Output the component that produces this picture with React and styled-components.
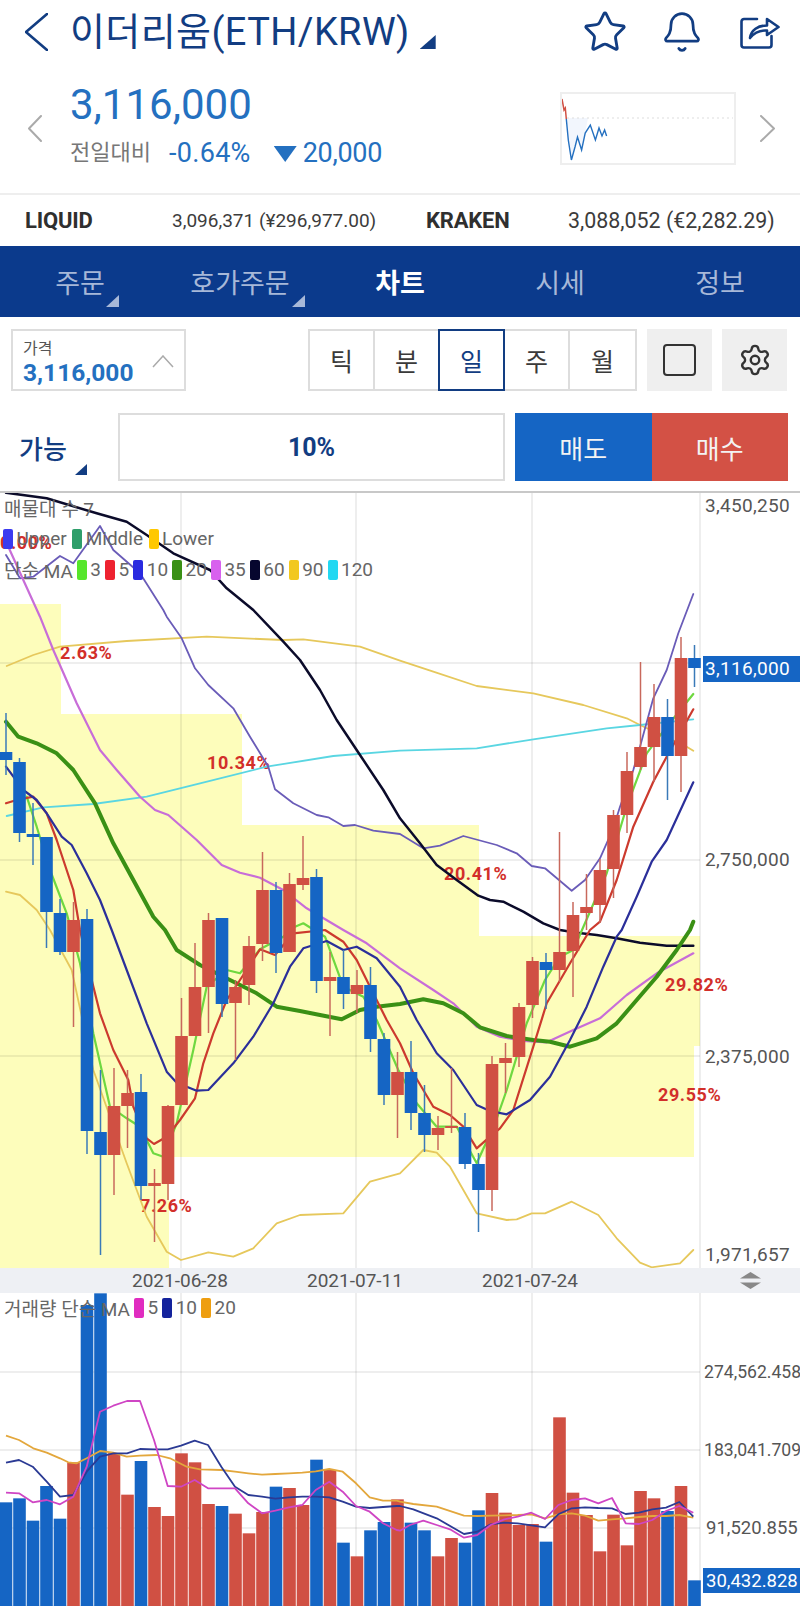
import React from 'react'
import styled, { createGlobalStyle } from 'styled-components'
import { Star, Bell, Settings } from 'lucide-react'

const BLUE = '#1565c4'
const RED = '#d05043'
const NAVY = '#123d82'

// zoom crops are 3x, so lines are noted in crop coords and scaled here
const seg = (ox, oy, pts) => pts.map(([x, y]) => [ox + x / 3, oy + y / 3])
const pts = (...segs) => segs.flat().map(([x, y]) => `${x.toFixed(1)},${y.toFixed(1)}`).join(' ')

const candleX = (i) => 6 + 13.5 * i

// color, wick high, body top, body bottom, wick low
const candles = [
  ['b', 713, 752, 760, 775], ['b', 758, 762, 833, 842], ['b', 803, 834, 837, 865], ['b', 837, 837, 912, 948],
  ['b', 899, 913, 952, 955], ['r', 902, 920, 952, 1027], ['b', 909, 919, 1131, 1154], ['b', 1070, 1132, 1155, 1255],
  ['r', 1068, 1106, 1155, 1195], ['r', 1070, 1093, 1106, 1148], ['b', 1074, 1092, 1186, 1200], ['r', 1169, 1183, 1186, 1242],
  ['r', 1105, 1106, 1184, 1200], ['r', 998, 1036, 1105, 1105], ['r', 943, 987, 1036, 1036], ['r', 913, 920, 987, 1033],
  ['b', 918, 918, 1004, 1017], ['r', 980, 987, 1003, 1060], ['r', 936, 946, 985, 1005], ['r', 852, 890, 944, 961],
  ['b', 882, 890, 953, 973], ['r', 873, 884, 952, 952], ['r', 836, 878, 885, 890], ['b', 869, 877, 981, 993],
  ['r', 952, 977, 981, 1036], ['b', 950, 977, 994, 1009], ['r', 970, 985, 994, 1013], ['b', 967, 985, 1039, 1052],
  ['b', 1033, 1039, 1095, 1105], ['r', 1052, 1072, 1095, 1138], ['b', 1041, 1072, 1113, 1130], ['b', 1085, 1113, 1135, 1152],
  ['r', 1116, 1128, 1135, 1150], ['r', 1068, 1126, 1128, 1133], ['b', 1113, 1127, 1164, 1169], ['b', 1153, 1164, 1190, 1232],
  ['r', 1056, 1064, 1190, 1211], ['r', 1043, 1058, 1063, 1093], ['r', 1003, 1007, 1057, 1067], ['r', 957, 961, 1005, 1018],
  ['b', 953, 962, 970, 1009], ['r', 832, 952, 970, 982], ['r', 902, 915, 951, 997], ['r', 874, 907, 913, 930],
  ['r', 859, 870, 905, 923], ['r', 810, 815, 869, 898], ['r', 752, 771, 815, 833], ['r', 662, 747, 767, 770],
  ['r', 684, 717, 747, 782], ['b', 699, 717, 756, 800], ['r', 637, 658, 756, 792], ['b', 645, 658, 668, 687],
]

const zones = [
  [61, 604, 714], [242, 714, 825], [479, 825, 936], [700, 936, 1046], [694, 1046, 1157], [169, 1157, 1268],
]

const percents = [
  ['0.00%', 0, 549], ['2.63%', 60, 659], ['10.34%', 207, 769], ['20.41%', 444, 880],
  ['29.82%', 665, 991], ['29.55%', 658, 1101], ['7.26%', 140, 1212],
]

const lines = [
  { c: '#e6c85c', w: 1.8, p: pts(seg(0, 580, [[20, 258], [100, 225], [180, 200], [380, 183], [620, 170], [850, 180], [910, 178], [1080, 200], [1200, 242]]), seg(400, 580, [[100, 275], [230, 318], [400, 340], [550, 375], [680, 415], [720, 435], [860, 500], [880, 512]])) },
  { c: '#e6c85c', w: 1.8, p: pts(seg(0, 580, [[18, 935], [60, 945], [110, 990], [150, 1050]]), seg(0, 930, [[215, 120], [280, 420], [380, 700], [440, 860], [500, 965], [543, 990], [625, 967], [700, 980], [760, 955], [830, 880], [900, 855], [1030, 850], [1110, 755], [1200, 730]]), seg(400, 930, [[70, 660], [110, 668], [150, 710], [230, 850], [320, 870], [350, 868], [395, 850], [435, 850], [515, 815], [595, 855], [650, 925], [720, 998], [755, 1012], [840, 1000], [880, 960]])) },
  { c: '#5ad6e2', w: 1.8, p: pts(seg(0, 580, [[20, 708], [130, 682], [280, 672], [440, 650], [600, 610], [800, 560], [1000, 528], [1200, 512]]), seg(400, 580, [[230, 505], [400, 478], [620, 445], [720, 435], [880, 418]])) },
  { c: '#6a5cb8', w: 1.8, p: pts(seg(0, 480, [[18, 225], [60, 295], [100, 290], [180, 228], [220, 250], [300, 138], [340, 210], [420, 280], [490, 390]]), seg(0, 580, [[500, 110], [545, 175], [585, 265], [625, 315], [700, 385], [750, 470], [805, 560], [825, 628], [880, 670], [950, 705], [985, 712], [1030, 738], [1065, 735], [1120, 752], [1200, 762]]), seg(400, 580, [[70, 805], [120, 797], [190, 768], [290, 795], [350, 820], [395, 858], [435, 865], [515, 932], [555, 900], [600, 835], [640, 745], [660, 680], [700, 570], [720, 500], [760, 355], [800, 270], [835, 160], [880, 42]])) },
  { c: '#c86dd8', w: 2.2, p: pts(seg(0, 480, [[25, 200]]), seg(0, 580, [[70, 0], [120, 110], [160, 210], [230, 370], [300, 510], [350, 570], [420, 650], [465, 690], [505, 705], [590, 780], [665, 855], [720, 878], [780, 893], [850, 930], [920, 985], [1030, 1050]]), seg(0, 930, [[1100, 40], [1200, 115]]), seg(400, 930, [[100, 180], [160, 220], [230, 290], [300, 320], [370, 333], [440, 337], [520, 300], [600, 265], [680, 195], [770, 130], [880, 70]])) },
  { c: '#0b0b2a', w: 2.5, p: pts(seg(0, 480, [[18, 38], [140, 55], [290, 100], [380, 125], [440, 165], [520, 220], [630, 270], [680, 325], [760, 390]]), seg(0, 580, [[850, 185], [900, 240], [960, 330], [1010, 420], [1080, 525], [1150, 630], [1200, 715]]), seg(400, 580, [[60, 790], [110, 855], [170, 900], [235, 947], [270, 960], [310, 965], [370, 995], [430, 1030], [480, 1050]]), seg(400, 930, [[530, 8], [590, 15], [650, 25], [720, 38], [800, 47], [880, 47]])) },
  { c: '#3a9015', w: 4, p: pts(seg(0, 580, [[18, 425], [55, 470], [110, 490], [170, 520], [220, 570], [285, 670], [340, 790], [400, 900], [460, 1010], [495, 1050]]), seg(0, 930, [[530, 60], [600, 105], [690, 150], [770, 190], [830, 230], [900, 243], [960, 255], [1025, 268], [1080, 240], [1130, 230], [1200, 222]]), seg(400, 930, [[70, 208], [130, 220], [190, 250], [240, 292], [320, 318], [400, 330], [450, 335], [510, 350], [590, 325], [650, 280], [710, 210], [770, 140], [830, 60], [870, 0]]), seg(400, 580, [[880, 1025]])) },
  { c: '#6fd840', w: 2.2, p: pts(seg(0, 580, [[80, 650], [110, 740], [150, 870], [200, 1000]]), seg(0, 930, [[240, 100], [280, 310], [330, 530], [380, 565], [420, 590], [460, 670], [490, 680], [530, 580], [580, 360], [620, 170], [680, 120], [720, 130], [780, 58], [850, 20], [885, -10], [910, -20], [975, 20], [1030, 170], [1090, 200], [1130, 270], [1195, 420]]), seg(400, 930, [[50, 520], [110, 590], [170, 590], [230, 700], [285, 580], [320, 480], [380, 280], [435, 150], [480, 80], [520, 60]]), seg(400, 580, [[620, 880], [680, 680], [740, 520], [800, 440], [880, 342]])) },
  { c: '#cc3a2e', w: 2.2, p: pts(seg(0, 580, [[18, 670], [50, 660], [100, 650], [140, 700], [170, 780], [220, 930], [240, 1050]]), seg(0, 930, [[270, 130], [300, 250], [340, 360], [385, 450], [400, 530], [440, 625], [462, 642], [500, 620], [540, 570], [585, 505], [610, 400], [640, 310], [680, 210], [720, 150], [780, 58], [825, 75], [880, 10], [975, 0], [1030, 35], [1070, 90], [1110, 170], [1160, 270], [1200, 340]]), seg(400, 930, [[40, 430], [100, 530], [150, 555], [190, 590], [230, 655], [270, 620], [300, 595], [340, 540], [400, 350], [440, 220], [510, 100], [570, 0]]), seg(400, 580, [[600, 1025], [650, 900], [700, 740], [760, 605], [800, 530], [880, 388]])) },
  { c: '#2b2f9a', w: 2.2, p: pts(seg(0, 580, [[18, 560], [70, 630], [110, 660], [140, 700], [185, 770], [215, 795], [260, 880], [300, 960], [335, 1050]]), seg(0, 930, [[380, 120], [440, 280], [500, 425], [530, 458], [590, 482], [625, 480], [700, 400], [760, 320], [820, 220], [870, 110], [910, 55], [980, 33], [1030, 60], [1070, 50], [1130, 85], [1200, 170]]), seg(400, 930, [[50, 270], [110, 370], [160, 420], [230, 525], [270, 543], [320, 553], [390, 510], [450, 440], [510, 330], [560, 230], [610, 110], [650, 20], [665, 0]]), seg(400, 580, [[710, 950], [755, 845], [800, 780], [880, 607]])) },
]

const volumes = [
  ['b', 697], ['b', 685], ['b', 752], ['b', 648], ['b', 746], ['r', 577], ['b', 105], ['b', 70], ['r', 550], ['r', 674],
  ['b', 573], ['r', 711], ['r', 738], ['r', 550], ['r', 577], ['r', 702], ['b', 708], ['r', 731], ['r', 790], ['r', 726],
  ['b', 650], ['r', 654], ['r', 705], ['b', 569], ['r', 600], ['b', 818], ['r', 859], ['b', 781], ['b', 756], ['r', 688],
  ['b', 758], ['b', 781], ['r', 859], ['r', 804], ['b', 818], ['b', 721], ['r', 669], ['r', 728], ['r', 765], ['r', 762],
  ['b', 815], ['r', 442], ['r', 668], ['r', 735], ['r', 844], ['r', 734], ['r', 826], ['r', 663], ['r', 685], ['b', 723],
  ['r', 648], ['b', 931],
]

const volumeLines = [
  { c: '#e3a73c', p: pts(seg(0, 1270, [[18, 497], [57, 510], [100, 535], [140, 548], [180, 565], [205, 577], [230, 580], [260, 565], [300, 543], [340, 548], [380, 560], [420, 557], [470, 555], [510, 565], [560, 590], [600, 598], [664, 600], [705, 605], [745, 610], [786, 614], [826, 612], [867, 610], [907, 608], [947, 604], [988, 597], [1028, 605], [1068, 640], [1109, 682], [1149, 692], [1190, 692]]), seg(400, 1270, [[0, 695], [40, 702], [110, 710], [192, 737], [232, 738], [272, 737], [313, 736], [353, 735], [394, 733], [435, 745], [475, 733], [515, 730], [555, 737], [595, 752], [636, 748], [677, 745], [717, 741], [757, 738], [798, 738], [838, 735], [880, 743]])) },
  { c: '#2b3a94', p: pts(seg(0, 1270, [[18, 578], [57, 570], [98, 590], [140, 635], [180, 680], [220, 675], [260, 605], [300, 560], [340, 550], [381, 550], [420, 537], [462, 538], [503, 538], [543, 527], [584, 512], [624, 525], [664, 590], [705, 650], [745, 675], [786, 680], [826, 686], [867, 682], [907, 680], [947, 680], [988, 682], [1028, 695], [1068, 710], [1109, 714], [1149, 711], [1190, 708]]), seg(400, 1270, [[0, 708], [40, 718], [110, 745], [192, 792], [232, 785], [272, 763], [313, 758], [353, 760], [394, 766], [435, 772], [475, 733], [515, 715], [555, 712], [595, 714], [636, 715], [677, 732], [717, 728], [757, 718], [798, 713], [838, 696], [880, 740]])) },
  { c: '#cf45c4', p: pts(seg(0, 1270, [[18, 668], [57, 670], [98, 697], [140, 690], [180, 703], [220, 680], [260, 590], [300, 425], [340, 407], [381, 393], [420, 393], [462, 510], [503, 648], [543, 650], [584, 630], [624, 655], [664, 655], [705, 655], [745, 700], [786, 730], [826, 722], [867, 712], [907, 705], [947, 660], [988, 635], [1028, 665], [1068, 708], [1109, 725], [1149, 760], [1190, 780]]), seg(400, 1270, [[0, 782], [30, 765], [70, 752], [110, 765], [150, 778], [192, 803], [232, 795], [272, 765], [313, 748], [353, 740], [394, 728], [435, 747], [475, 705], [515, 690], [555, 685], [595, 700], [636, 684], [677, 760], [717, 762], [757, 750], [798, 723], [838, 708], [880, 728]])) },
]

const bandItems = [
  ['#3b3bf0', 'Upper'], ['#2e9e6a', 'Middle'], ['#ffc800', 'Lower'],
]
const maItems = [
  ['#55e62c', '3'], ['#ee2230', '5'], ['#2a2ae0', '10'], ['#3a9015', '20'],
  ['#d860ee', '35'], ['#06062e', '60'], ['#f2c81e', '90'], ['#22d8f2', '120'],
]
const volumeItems = [['#e02cc0', '5'], ['#14239c', '10'], ['#ee9e10', '20']]

const tabs = [
  { label: '주문', mark: true },
  { label: '호가주문', mark: true },
  { label: '차트', active: true },
  { label: '시세' },
  { label: '정보' },
]
const periods = ['틱', '분', '일', '주', '월']

const GlobalStyle = createGlobalStyle`
  html, body {
    margin: 0;
    background: #fff;
  }
  body, button {
    font-family: Roboto, "Noto Sans CJK KR", sans-serif;
  }
`

const Page = styled.div`
  width: 800px;
  height: 1619px;
  overflow: hidden;
  display: flex;
  flex-direction: column;
  background: #fff;
`

const TitleBar = styled.header`
  height: 64px;
  padding: 0 20px 0 25px;
  display: flex;
  align-items: center;
  color: ${NAVY};
`

const Title = styled.h1`
  margin: 0 0 0 22px;
  font-size: 38px;
  font-weight: 400;
  letter-spacing: 0.4px;
  white-space: nowrap;
  line-height: 64px;
`

const TitleMark = styled.span`
  width: 16px;
  height: 14px;
  margin: 20px 0 0 10px;
  background: ${NAVY};
  clip-path: polygon(100% 0, 100% 100%, 0 100%);
`

const TitleIcons = styled.div`
  margin-left: auto;
  display: flex;
  align-items: center;
  gap: 36px;
`

const StarIcon = styled(Star)`
  margin-right: -4px;
`

const Quote = styled.section`
  height: 129px;
  padding: 0 25px 0 28px;
  display: flex;
  align-items: center;
`

const QuoteInfo = styled.div`
  margin-left: 28px;
  padding-bottom: 7px;
  flex: 1;
  display: flex;
  flex-direction: column;
  gap: 8px;
  color: #2470c0;
`

const LastPrice = styled.div`
  font-size: 42px;
  line-height: 48px;
`

const ChangeRow = styled.div`
  display: flex;
  align-items: center;
  font-size: 27px;
  line-height: 32px;
`

const ChangeLabel = styled.span`
  width: 99px;
  font-size: 22px;
  color: #777;
`

const ChangeValue = styled.span`
  letter-spacing: 0.3px;
`

const DownMark = styled.span`
  width: 23px;
  height: 16px;
  margin: 2px 6px 0 23px;
  background: #2470c0;
  clip-path: polygon(0 0, 100% 0, 50% 100%);
`

const ChangeAmount = styled.span`
  letter-spacing: -0.3px;
`

const Spark = styled.div`
  width: 176px;
  height: 73px;
  margin-right: 24px;
  box-sizing: border-box;
  border: 2px solid #eee;
`

const ExchangeRow = styled.section`
  height: 51px;
  padding-left: 25px;
  border-top: 2px solid #eee;
  display: grid;
  grid-template-columns: 147px 254px 142px auto;
  align-items: center;
  color: #3c3c3c;
  white-space: nowrap;
`

const ExchangeName = styled.b`
  font-size: 22px;
  font-weight: 700;
  letter-spacing: -0.2px;
  color: #2f2f2f;
`

const ExchangeValue = styled.span`
  font-size: ${(p) => p.$size}px;
`

const TabBar = styled.nav`
  height: 71px;
  flex: none;
  display: grid;
  grid-template-columns: repeat(5, 1fr);
  background: #0b3a8c;
`

const Tab = styled.div`
  position: relative;
  display: flex;
  align-items: center;
  justify-content: center;
  font-size: 27px;
  font-weight: ${(p) => (p.$active ? 700 : 400)};
  color: ${(p) => (p.$active ? '#fff' : '#a7b8d8')};
`

const TabMark = styled.span`
  position: absolute;
  right: ${(p) => p.$right}px;
  bottom: 10px;
  width: 13px;
  height: 12px;
  background: #a7b8d8;
  clip-path: polygon(100% 0, 100% 100%, 0 100%);
`

const Toolbar = styled.section`
  height: 62px;
  flex: none;
  margin-top: 12px;
  padding-left: 11px;
  display: flex;
  align-items: stretch;
`

const PriceBox = styled.div`
  width: 175px;
  box-sizing: border-box;
  margin-right: 122px;
  padding: 8px 0 0 10px;
  border: 2px solid #ddd;
  position: relative;
`

const PriceBoxLabel = styled.div`
  font-size: 16px;
  line-height: 20px;
  color: #555;
`

const PriceBoxValue = styled.div`
  font-size: 24.5px;
  line-height: 28px;
  font-weight: 700;
  color: #2470c0;
`

const Stepper = styled.svg`
  position: absolute;
  right: 10px;
  top: 24px;
`

const Periods = styled.div`
  width: 329px;
  box-sizing: border-box;
  border: 2px solid #ddd;
  display: grid;
  grid-template-columns: 63px 65px 65px 65px 1fr;
`

const Period = styled.div`
  display: flex;
  align-items: center;
  justify-content: center;
  font-size: 25px;
  color: #3a3a3a;
  border-left: 2px solid #ddd;
  &:first-child {
    border-left: 0;
  }
  ${(p) => p.$active && `
    margin: -2px -2px -2px 0;
    border: 2px solid ${NAVY};
    color: ${NAVY};
    z-index: 1;
  `}
`

const ToolButton = styled.div`
  width: 65px;
  margin-left: 10px;
  background: #efefef;
  color: #333;
  display: flex;
  align-items: center;
  justify-content: center;
`

const SquareGlyph = styled.span`
  width: 33px;
  height: 32px;
  box-sizing: border-box;
  border: 2.5px solid #333;
  border-radius: 4px;
`

const OrderRow = styled.section`
  height: 68px;
  flex: none;
  margin-top: 22px;
  padding-left: 19px;
  display: flex;
  align-items: stretch;
`

const Available = styled.div`
  width: 99px;
  position: relative;
  display: flex;
  align-items: center;
  font-size: 26px;
  font-weight: 500;
  color: ${NAVY};
`

const AvailableMark = styled.span`
  position: absolute;
  left: 56px;
  bottom: 6px;
  width: 12px;
  height: 11px;
  background: ${NAVY};
  clip-path: polygon(100% 0, 100% 100%, 0 100%);
`

const RatioBox = styled.div`
  width: 387px;
  box-sizing: border-box;
  margin-right: 10px;
  border: 2px solid #ddd;
  display: flex;
  align-items: center;
  justify-content: center;
  font-size: 25px;
  font-weight: 700;
  color: ${NAVY};
`

const SideButton = styled.div`
  width: 136.5px;
  display: flex;
  align-items: center;
  justify-content: center;
  font-size: 26px;
  color: #f3f3f3;
  background: ${(p) => p.$bg};
`

const ChartTop = styled.div`
  height: 2px;
  flex: none;
  margin-top: 10px;
  background: #c8c8c8;
`

const Pane = styled.div`
  position: relative;
  flex: none;
  height: ${(p) => p.$h}px;
`

const PlotSvg = styled.svg`
  display: block;
  font-family: Roboto, "Noto Sans CJK KR", sans-serif;
`

const Legend = styled.div`
  position: absolute;
  left: 3px;
  top: ${(p) => p.$top}px;
  display: flex;
  flex-direction: column;
  font-size: 19px;
  color: #666;
`

const LegendRow = styled.div`
  height: 31px;
  display: flex;
  align-items: center;
  gap: ${(p) => p.$gap || 4}px;
  padding-left: ${(p) => p.$indent || 0}px;
`

const LegendItem = styled.span`
  display: flex;
  align-items: center;
  gap: 3.500px;
`

const Swatch = styled.i`
  width: 10px;
  height: 20px;
  border-radius: 2px;
  background: ${(p) => p.$c};
`

const TimeAxis = styled.div`
  height: 25px;
  flex: none;
  padding: 0 39px 0 132px;
  display: flex;
  align-items: center;
  gap: 77px;
  background: #eef0f4;
  font-size: 19px;
  color: #555;
`

const TimeLabel = styled.span`
  width: 98px;
  white-space: nowrap;
`

const SortGlyph = styled.svg`
  margin-left: auto;
`

const axisStyle = { fontSize: 19, letterSpacing: 0.3, fill: '#555' }
const volumeAxisStyle = { fontSize: 18.5, fill: '#555' }
const longAxisStyle = { fontSize: 17.6, fill: '#555' }

const Chevron = ({ dir, w, h, color, sw }) => (
  <svg width={w} height={h} viewBox={`0 0 ${w} ${h}`} fill="none" stroke={color} strokeWidth={sw} strokeLinecap="round" strokeLinejoin="round">
    {dir === 'left'
      ? <polyline points={`${w - 1},1 1,${h / 2} ${w - 1},${h - 1}`} />
      : <polyline points={`1,1 ${w - 1},${h / 2} 1,${h - 1}`} />}
  </svg>
)

const ShareIcon = () => (
  <svg width="40" height="36" viewBox="0 0 40 36" fill="none" stroke={NAVY} strokeWidth="2.6" strokeLinecap="round" strokeLinejoin="round">
    <path d="M17 5H4a2.5 2.5 0 0 0-2.5 2.5V31A2.5 2.5 0 0 0 4 33.500H29a2.500 2.500 0 0 0 2.500-2.500V22" />
    <path d="M10 24C11 16 18 11.500 27 11.500V5L38.500 13 27 21V16.500C20 16 14 19 10 24Z" />
  </svg>
)

const SparkChart = () => (
  <svg width="172" height="69" viewBox="1 1 172 69">
    <polygon points="5,25 7,47 10,66 14,54 17,44 21,57 24,40 27,25" fill="#f2f6fd" />
    <line x1="6" y1="25" x2="172" y2="25" stroke="#ddd" strokeDasharray="2 3" />
    <polyline points="1,6 3,17 4.300,15 5.300,26" fill="none" stroke={RED} strokeWidth="1.5" />
    <polyline points="5.300,26 7.300,47 10.400,67 14,54 16.500,44 20.600,57 24.200,40 29.300,32 34.400,47 38,35 41,43 43.600,37 45.600,43" fill="none" stroke="#2470c0" strokeWidth="1.4" />
  </svg>
)

const PricePlot = () => (
  <PlotSvg width="800" height="775" viewBox="0 493 800 775">
    {zones.map(([w, y1, y2]) => (
      <rect key={y1} x="0" y={y1} width={w} height={y2 - y1} fill="#fdfdbb" />
    ))}
    <g stroke="#000" strokeOpacity="0.09" strokeWidth="1.5">
      {[181, 356, 532, 700].map((x) => <line key={x} x1={x} y1="493" x2={x} y2="1268" />)}
      {[663, 860, 1056].map((y) => <line key={y} x1="0" y1={y} x2="700" y2={y} />)}
    </g>
    {percents.map(([t, x, y]) => (
      <text key={t} x={x} y={y} fontSize="18" fontWeight="700" letterSpacing="0.6" fill="#d22f2a">{t}</text>
    ))}
    {lines.map((l, i) => (
      <polyline key={i} points={l.p} fill="none" stroke={l.c} strokeWidth={l.w} strokeLinejoin="round" strokeLinecap="round" />
    ))}
    {candles.map(([c, hi, top, bot, lo], i) => {
      const color = c === 'b' ? BLUE : RED
      const wick = c === 'b' ? '#3a7ab8' : '#c8685c'
      const x = candleX(i)
      return (
        <g key={i}>
          <line x1={x} y1={hi} x2={x} y2={lo} stroke={wick} strokeWidth="1.5" />
          <rect x={x - 6.3} y={top} width="12.6" height={bot - top} fill={color} />
        </g>
      )
    })}
    <text x="705" y="512" style={axisStyle}>3,450,250</text>
    <text x="705" y="866" style={axisStyle}>2,750,000</text>
    <text x="705" y="1063" style={axisStyle}>2,375,000</text>
    <text x="705" y="1261" style={axisStyle}>1,971,657</text>
    <rect x="703" y="656" width="97" height="26" fill={BLUE} />
    <text x="705" y="675" style={{ ...axisStyle, fill: '#fff' }}>3,116,000</text>
  </PlotSvg>
)

const VolumePlot = () => (
  <PlotSvg width="800" height="313" viewBox="0 1293 800 313">
    <g stroke="#000" strokeOpacity="0.09" strokeWidth="1.5">
      {[181, 356, 532, 700].map((x) => <line key={x} x1={x} y1="1293" x2={x} y2="1606" />)}
      {[1372, 1450, 1528].map((y) => <line key={y} x1="0" y1={y} x2="700" y2={y} />)}
      <line x1="0" y1="1606" x2="700" y2="1606" />
    </g>
    {volumes.map(([c, z], i) => {
      const top = 1270 + z / 3
      return <rect key={i} x={candleX(i) - 6.3} y={top} width="12.6" height={1606 - top} fill={c === 'b' ? BLUE : RED} />
    })}
    {volumeLines.map((l, i) => (
      <polyline key={i} points={l.p} fill="none" stroke={l.c} strokeWidth="1.8" strokeLinejoin="round" />
    ))}
    <text x="704" y="1378" style={longAxisStyle}>274,562.458</text>
    <text x="704" y="1456" style={longAxisStyle}>183,041.709</text>
    <text x="706" y="1534" style={volumeAxisStyle}>91,520.855</text>
    <rect x="703" y="1568" width="97" height="25" fill={BLUE} />
    <text x="706" y="1587" style={{ ...volumeAxisStyle, fill: '#fff' }}>30,432.828</text>
  </PlotSvg>
)

const App = () => {
  return (
    <Page>
      <GlobalStyle />
      <TitleBar>
        <Chevron dir="left" w={23} h={38} color={NAVY} sw={2.6} />
        <Title>이더리움(ETH/KRW)</Title>
        <TitleMark />
        <TitleIcons>
          <StarIcon size={46} color={NAVY} strokeWidth={1.5} />
          <Bell size={44} color={NAVY} strokeWidth={1.5} />
          <ShareIcon />
        </TitleIcons>
      </TitleBar>
      <Quote>
        <Chevron dir="left" w={14} h={27} color="#aaa" sw={2} />
        <QuoteInfo>
          <LastPrice>3,116,000</LastPrice>
          <ChangeRow>
            <ChangeLabel>전일대비</ChangeLabel>
            <ChangeValue>-0.64%</ChangeValue>
            <DownMark />
            <ChangeAmount>20,000</ChangeAmount>
          </ChangeRow>
        </QuoteInfo>
        <Spark><SparkChart /></Spark>
        <Chevron dir="right" w={15} h={27} color="#aaa" sw={2} />
      </Quote>
      <ExchangeRow>
        <ExchangeName>LIQUID</ExchangeName>
        <ExchangeValue $size={19}>3,096,371 (¥296,977.00)</ExchangeValue>
        <ExchangeName>KRAKEN</ExchangeName>
        <ExchangeValue $size={21.4}>3,088,052 (€2,282.29)</ExchangeValue>
      </ExchangeRow>
      <TabBar>
        {tabs.map((t) => (
          <Tab key={t.label} $active={t.active}>
            {t.label}
            {t.mark && <TabMark $right={t.label.length > 2 ? 15 : 41} />}
          </Tab>
        ))}
      </TabBar>
      <Toolbar>
        <PriceBox>
          <PriceBoxLabel>가격</PriceBoxLabel>
          <PriceBoxValue>3,116,000</PriceBoxValue>
          <Stepper width="22" height="13" viewBox="0 0 22 13" fill="none" stroke="#aaa" strokeWidth="1.500">
            <polyline points="1,12 11,1 21,12" />
          </Stepper>
        </PriceBox>
        <Periods>
          {periods.map((p) => <Period key={p} $active={p === '일'}>{p}</Period>)}
        </Periods>
        <ToolButton><SquareGlyph /></ToolButton>
        <ToolButton><Settings size={34} strokeWidth={1.7} /></ToolButton>
      </Toolbar>
      <OrderRow>
        <Available>가능<AvailableMark /></Available>
        <RatioBox>10%</RatioBox>
        <SideButton $bg={BLUE}>매도</SideButton>
        <SideButton $bg="#d35145">매수</SideButton>
      </OrderRow>
      <ChartTop />
      <Pane $h={775}>
        <PricePlot />
        <Legend $top={-1}>
          <LegendRow $indent={1}>매물대 수 7</LegendRow>
          <LegendRow $gap={5.5}>
            {bandItems.map(([c, t]) => <LegendItem key={t}><Swatch $c={c} />{t}</LegendItem>)}
          </LegendRow>
          <LegendRow $indent={1}>
            단순 MA
            {maItems.map(([c, t]) => <LegendItem key={t}><Swatch $c={c} />{t}</LegendItem>)}
          </LegendRow>
        </Legend>
      </Pane>
      <TimeAxis>
        <TimeLabel>2021-06-28</TimeLabel>
        <TimeLabel>2021-07-11</TimeLabel>
        <TimeLabel>2021-07-24</TimeLabel>
        <SortGlyph width="21" height="17" viewBox="0 0 21 17" fill="#888">
          <polygon points="10.500,0 21,6.500 0,6.500" />
          <polygon points="0,10.500 21,10.500 10.500,17" />
        </SortGlyph>
      </TimeAxis>
      <Pane $h={313}>
        <VolumePlot />
        <Legend $top={-1}>
          <LegendRow $indent={1}>
            거래량 단순 MA
            {volumeItems.map(([c, t]) => <LegendItem key={t}><Swatch $c={c} />{t}</LegendItem>)}
          </LegendRow>
        </Legend>
      </Pane>
    </Page>
  )
}

export default App
